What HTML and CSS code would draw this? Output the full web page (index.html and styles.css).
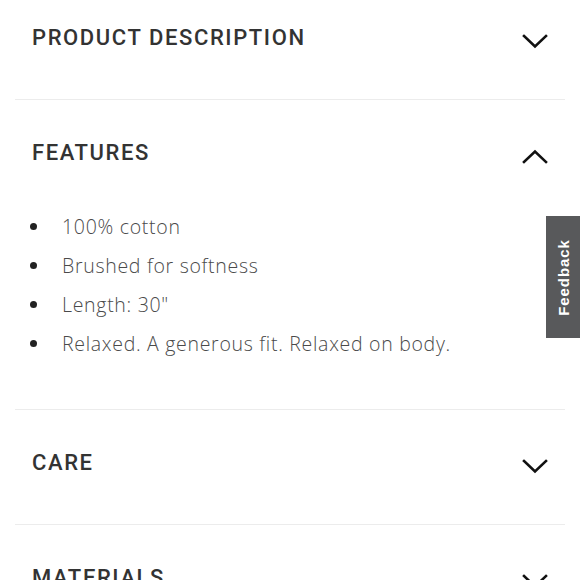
FILE: index.html
```html
<!DOCTYPE html>
<html lang="en">
<head>
<meta charset="utf-8">
<title>Product details</title>
<link rel="stylesheet" href="styles.css">
</head>
<body>
<div class="accordion">
  <section class="acc-item first">
    <div class="acc-head">
      <h2 class="acc-title">PRODUCT DESCRIPTION</h2>
      <svg class="chev" viewBox="0 0 26 15" width="26" height="15"><path d="M2 2 L13 12.5 L24 2" fill="none" stroke="#111" stroke-width="2.6" stroke-linecap="square"/></svg>
    </div>
  </section>
  <section class="acc-item open">
    <div class="acc-head">
      <h2 class="acc-title">FEATURES</h2>
      <svg class="chev" viewBox="0 0 26 15" width="26" height="15"><path d="M2 13 L13 2.5 L24 13" fill="none" stroke="#111" stroke-width="2.6" stroke-linecap="square"/></svg>
    </div>
    <ul class="features">
      <li>100% cotton</li>
      <li>Brushed for softness</li>
      <li>Length: 30"</li>
      <li>Relaxed. A generous fit. Relaxed on body.</li>
    </ul>
  </section>
  <section class="acc-item">
    <div class="acc-head">
      <h2 class="acc-title">CARE</h2>
      <svg class="chev" viewBox="0 0 26 15" width="26" height="15"><path d="M2 2 L13 12.5 L24 2" fill="none" stroke="#111" stroke-width="2.6" stroke-linecap="square"/></svg>
    </div>
  </section>
  <section class="acc-item">
    <div class="acc-head">
      <h2 class="acc-title">MATERIALS</h2>
      <svg class="chev" viewBox="0 0 26 15" width="26" height="15"><path d="M2 2 L13 12.5 L24 2" fill="none" stroke="#111" stroke-width="2.6" stroke-linecap="square"/></svg>
    </div>
  </section>
</div>
<div class="feedback"><span>Feedback</span></div>
</body>
</html>
```
FILE: styles.css
```css
html, body {
  margin: 0;
  padding: 0;
  background: #fff;
  overflow: hidden;
}
body {
  width: 580px;
  height: 580px;
  font-family: "Roboto", "Liberation Sans", sans-serif;
}
.accordion {
  padding: 0 15px;
  margin-top: -15px;
}
.acc-item {
  border-bottom: 1px solid #ececec;
}
.acc-head {
  display: flex;
  align-items: center;
  justify-content: space-between;
  padding: 40px 19px 48px 17px;
}
.acc-item.open .acc-head {
  padding-bottom: 41px;
}
.acc-title {
  margin: 0;
  font-family: "Roboto", "Liberation Sans", sans-serif;
  font-weight: 500;
  font-size: 22px;
  line-height: 26px;
  letter-spacing: 1.6px;
  color: #333;
}
.chev {
  display: block;
  margin-top: 6px;
  margin-right: -2px;
}
.features {
  list-style: none;
  margin: 0;
  padding: 0 0 46px 15px;
}
.features li {
  position: relative;
  padding-left: 32px;
  font-family: "Open Sans", "Lato", sans-serif;
  font-weight: 300;
  font-size: 19.5px;
  line-height: 39px;
  color: #4a4a4a;
  letter-spacing: 0.7px;
}
.features li::before {
  content: "";
  position: absolute;
  left: 0;
  top: 16px;
  width: 7px;
  height: 7px;
  border-radius: 50%;
  background: #222;
}
.feedback {
  position: absolute;
  right: 0;
  top: 216px;
  width: 34px;
  height: 122px;
  background: #58595b;
  display: flex;
  align-items: center;
  justify-content: center;
}
.feedback span {
  transform: rotate(-90deg);
  color: #fff;
  font-family: "Liberation Sans", Arial, sans-serif;
  font-weight: 700;
  font-size: 15px;
  letter-spacing: 0.9px;
  white-space: nowrap;
}
```
